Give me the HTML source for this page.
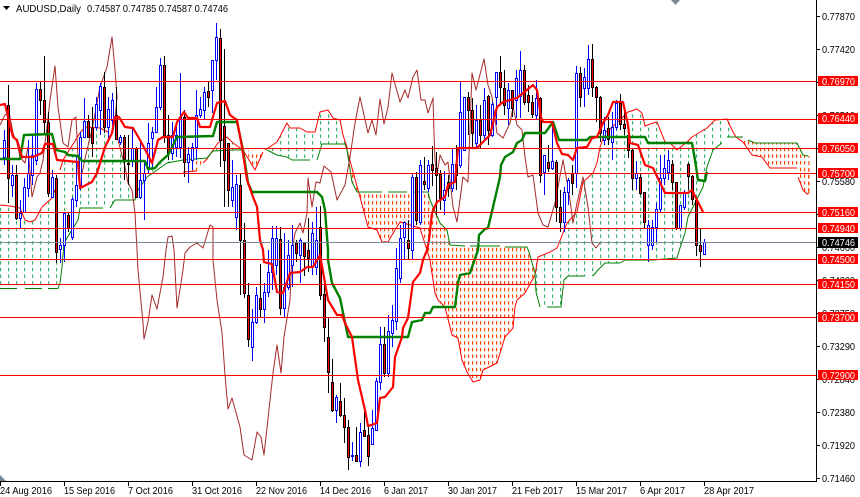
<!DOCTYPE html>
<html>
<head>
<meta charset="utf-8">
<style>
html,body{margin:0;padding:0;background:#fff;}
svg{display:block;}
text{font-family:"Liberation Sans",sans-serif;}
.d{font-size:10.5px;fill:#000;}
.p{font-size:10.5px;fill:#000;}
.w{font-size:10.5px;fill:#fff;}
.t{fill:none;stroke-linejoin:round;}
</style>
</head>
<body>
<svg width="860" height="497" viewBox="0 0 860 497" xmlns="http://www.w3.org/2000/svg">
<defs>
<pattern id="g" x="0" y="1" width="8" height="6.67" patternUnits="userSpaceOnUse"><rect x="0" y="0" width="1.2" height="3.5" fill="#3CB371"/></pattern>
<pattern id="o" x="0" y="1" width="4" height="6.67" patternUnits="userSpaceOnUse"><rect x="0" y="0" width="1.2" height="3.5" fill="#FF4500"/></pattern>
</defs>
<rect width="860" height="497" fill="#fff"/>

<!-- cloud fills -->
<path fill="url(#g)" d="M0 205L10 206L20 208L25 220L30 222L35 220L42 207L52 198L55 190L60 170L63 160L80 133L85 127L100 128L108 132L115 143L123 145L135 147L147 163L167 160L183 160L167 163L157 170L147 177L138 190L135 200L115 200L110 208L80 208L78 220L64 243L62 267L60 283L58 288L0 288Z"/>
<path fill="url(#o)" d="M183 160L207 159L203 163L197 171L183 172Z"/>
<path fill="url(#g)" d="M205 160L213 150L218 143L227 137L233 143L243 150L233 150L213 151L207 158Z"/>
<path fill="url(#o)" d="M245 150L263 152L255 170Z"/>
<path fill="url(#g)" d="M265 150L277 142L287 123L290 128L300 128L307 132L315 132L320 112L328 110L333 118L340 120L343 135L347 147L345 144L322 144L317 160L292 160L287 157L277 155L267 150Z"/>
<path fill="url(#o)" d="M347 147L352 182L357 192L428 192L430 200L440 223L447 230L450 245L527 247L529 252L535 273L525 293L517 300L515 307L513 328L505 337L497 363L483 370L480 380L473 382L467 372L462 360L458 338L452 335L445 307L438 300L435 293L430 260L420 228L400 222L392 235L388 242L382 242L377 230L368 227L360 197L347 150Z"/>
<path fill="url(#g)" d="M535 267L538 257L550 252L557 248L563 233L567 223L577 212L583 182L593 173L597 163L600 147L605 133L612 127L620 120L628 112L637 109L642 113L645 126L653 123L657 122L665 142L670 143L677 150L687 142L692 137L707 128L715 120L727 119L733 132L736 137L727 137L722 143L713 150L707 167L703 187L698 197L688 217L685 233L680 248L677 258L653 260L625 260L620 263L605 263L598 270L593 276L568 276L564 280L562 297L561 307L547 307L540 307L536 292L535 275Z"/>
<path fill="url(#o)" d="M727 137L743 137L748 140L755 143L797 143L803 155L808 156L809 193L807 194L803 190L798 177L797 168L770 168L762 157L752 155L743 142L735 137Z"/>

<!-- cloud edges: span A (red), span B (green) -->
<g class="t" stroke="#FF0000" stroke-width="1">
<polyline points="0,205 10,206 20,208 25,220 30,222 35,220 42,207 52,198 55,190"/>
<polyline points="60,170 63,160 80,133 85,127 100,128 108,132"/>
<polyline points="183,172 197,171"/>
<polyline points="203,163 207,159 213,150 218,143 227,137 233,143 243,150 255,170 263,152"/>
<polyline points="265,150 277,142 287,123 290,128 300,128 307,132 315,132 320,112 328,110 333,118 340,120 343,135 347,147 347,150 360,197 368,227 377,230 382,242 388,242 392,235 400,222 420,228 430,260 435,293 438,300 445,307 452,335 458,338 462,360 467,372 473,382 480,380 483,370 497,363 505,337 513,328 515,307 517,300 525,293 535,275 538,257 550,252 557,248 563,233 567,223 577,212 583,182 593,173 597,163 600,147 605,133 612,127 620,120 628,112 637,109 642,113 645,126 653,123 657,122 665,142 670,143 677,150 687,142 692,137 707,128 715,120 727,119 733,132 736,137 743,142 752,155 762,157 770,168 797,168"/>
<polyline points="798,177 803,190 807,194 809,193"/>
</g>
<g class="t" stroke="#FF4500" stroke-width="1">
<polyline points="809,193 809,156" stroke-dasharray="4 3"/>
</g>
<g class="t" stroke="#008000" stroke-width="1">
<polyline points="0,288.5 17,288.5"/><polyline points="25,288.5 42,288.5"/><polyline points="48,288.5 58,288.5 60,283 62,267 64,243 70,233 78,220 80,208 103,208"/>
<polyline points="110,208 115,200 135,200 138,190 147,177 157,170 167,163 183,160 207,158 213,151 233,150 243,150"/>
<polyline points="267,150 277,155 287,157 292,160 310,160"/><polyline points="317,160 322,144 345,144"/>
<polyline points="345,144 347,150 352,182 357,192 382,192"/><polyline points="388,192 407,192"/><polyline points="412,192 428,192 430,200 440,223 447,230 450,245 465,246"/><polyline points="470,246 500,246"/><polyline points="505,247 527,247 529,252 535,273 536,292 540,307"/>
<polyline points="547,307 561,307 562,297 564,280 568,276 585,276"/><polyline points="593,276 598,270 605,263 620,263 625,260 653,260 677,258 680,248 685,233 688,217 698,197 703,187 707,167 713,150 722,143"/>
<polyline points="727,137 743,137"/><polyline points="748,140 755,143 797,143 803,155 808,156"/>
</g>

<!-- chikou -->
<polyline class="t" stroke="#A52A2A" stroke-width="1" points="0,125 5,115 9,112 13,133 17,143 20,157 25,163 28,147 32,197 37,177 40,173 43,160 47,127 50,100 55,66 58,107 63,143 68,147 72,120 76,117 78,157 82,173 87,150 92,130 100,87 107,67 112,37 115,70 117,97 115,120 118,140 125,167 128,183 132,190 135,213 137,250 138,270 143,323 144,339 148,322 152,295 157,309 163,277 166,250 168,237 172,236 174,250 177,308 183,270 185,253 190,247 197,243 203,248 210,225 213,227 213,260 217,300 222,333 225,375 228,409 232,398 240,427 244,455 252,460 257,432 261,437 264,455 273,373 277,345 281,373 284,337 290,300 292,250 295,233 300,223 303,233 307,213 308,178 312,207 316,182 320,183 324,166 331,172 337,200 345,185 350,157 355,123 360,97 368,133 372,120 376,135 380,99 384,124 388,107 392,73 400,102 405,90 408,98 413,77 417,70 421,100 425,100 428,113 433,98 434,133 435,160 437,175 440,155 445,165 448,162 453,207 457,222 463,177 468,182 472,73 476,90 484,59 488,85 492,97 497,133 503,138 510,123 513,107 517,125 522,130 525,157 528,177 533,175 538,213 543,225 548,227 555,203 563,160 568,187 570,200 573,223 577,203 583,177 588,207 592,243 596,248 600,243"/>

<!-- candle wicks -->
<path stroke="#0000FF" fill="none" stroke-width="1" shape-rendering="crispEdges" d="M4.5 130V165M12.5 165V197M20.5 200V228M24.5 178V213M28.5 140V197M32.5 135V185M36.5 83V165M52.5 170V198M60.5 238V263M64.5 213V262M72.5 197V240M76.5 157V207M80.5 132V190M84.5 98V138M96.5 97V130M100.5 83V135M108.5 97V140M112.5 93V133M120.5 135V145M132.5 127V167M140.5 140V199M144.5 163V220M148.5 123V173M152.5 127V167M156.5 87V133M160.5 58V110M172.5 122V160M176.5 122V157M180.5 73V158M188.5 147V183M192.5 143V170M196.5 90V160M200.5 97V118M204.5 87V120M212.5 60V113M216.5 23V80M232.5 160V207M236.5 175V230M252.5 309V361M256.5 287V324M264.5 283V323M268.5 250V297M272.5 226V290M276.5 226V275M284.5 233V317M288.5 240V290M292.5 225V287M300.5 238V283M312.5 222V275M316.5 207V275M336.5 395V423M352.5 442V461M360.5 423V467M372.5 410V444M376.5 378V430M380.5 327V390M388.5 315V377M392.5 305V347M396.5 248V330M400.5 225V283M404.5 222V260M412.5 174V260M420.5 160V225M428.5 160V192M444.5 171V215M452.5 149V192M460.5 82V168M464.5 97V150M476.5 105V147M484.5 88V140M492.5 102V137M496.5 72V125M508.5 83V125M516.5 70V118M520.5 51V118M536.5 80V120M544.5 155V195M552.5 125V170M564.5 187V232M568.5 178V205M576.5 66V188M584.5 68V107M588.5 45V95M604.5 117V145M612.5 112V160M616.5 100V130M636.5 161V190M648.5 220V262M652.5 220V250M656.5 203V243M660.5 155V212M664.5 155V185M668.5 150V180M680.5 205V230M684.5 190V210M704.5 239V254"/>
<path stroke="#000" fill="none" stroke-width="1" shape-rendering="crispEdges" d="M8.5 85V203M16.5 165V220M40.5 82V115M44.5 56V133M48.5 112V197M56.5 175V263M68.5 213V232M88.5 115V138M92.5 107V157M104.5 72V133M116.5 87V140M124.5 135V180M128.5 135V185M136.5 147V197M164.5 56V143M168.5 115V160M184.5 110V177M208.5 82V107M220.5 29V167M224.5 49V207M228.5 143V207M240.5 173V295M244.5 223V298M248.5 283V347M260.5 264V317M280.5 227V315M296.5 240V262M304.5 242V276M308.5 218V272M320.5 206V300M324.5 280V342M328.5 318V393M332.5 359V412M340.5 383V417M344.5 398V443M348.5 420V470M356.5 427V461M364.5 406V437M368.5 425V466M384.5 327V377M408.5 220V260M416.5 172V225M424.5 157V190M432.5 146V186M436.5 152V215M440.5 170V210M448.5 175V197M456.5 145V190M468.5 92V135M472.5 98V147M480.5 105V148M488.5 95V145M500.5 56V105M504.5 70V115M512.5 90V117M524.5 65V105M528.5 85V112M532.5 95V118M540.5 97V183M548.5 145V172M556.5 160V222M560.5 190V232M572.5 165V195M580.5 67V107M592.5 44V97M596.5 86V122M600.5 96V142M608.5 117V145M620.5 94V130M624.5 108V135M628.5 128V158M632.5 148V190M640.5 173V195M644.5 192V228M672.5 160V190M676.5 182V230M688.5 163V190M692.5 175V205M696.5 200V256M700.5 229V267"/>
<!-- bull bodies -->
<path stroke="#0000FF" fill="#fff" stroke-width="1" shape-rendering="crispEdges" d="M3.5 140.5h2V157.5h-2zM11.5 175.5h2V185.5h-2zM19.5 213.5h2V218.5h-2zM23.5 187.5h2V212.5h-2zM27.5 173.5h2V188.5h-2zM31.5 155.5h2V175.5h-2zM35.5 89.5h2V160.5h-2zM51.5 177.5h2V197.5h-2zM59.5 245.5h2V249.5h-2zM63.5 213.5h2V245.5h-2zM71.5 199.5h2V237.5h-2zM75.5 185.5h2V200.5h-2zM79.5 137.5h2V185.5h-2zM83.5 121.5h2V137.5h-2zM95.5 104.5h2V127.5h-2zM99.5 86.5h2V110.5h-2zM107.5 109.5h2V127.5h-2zM111.5 100.5h2V120.5h-2zM119.5 137.5h2V142.5h-2zM131.5 148.5h2V160.5h-2zM139.5 180.5h2V197.5h-2zM143.5 173.5h2V180.5h-2zM147.5 143.5h2V167.5h-2zM151.5 132.5h2V138.5h-2zM155.5 107.5h2V132.5h-2zM159.5 65.5h2V107.5h-2zM171.5 135.5h2V153.5h-2zM175.5 135.5h2V147.5h-2zM179.5 117.5h2V147.5h-2zM187.5 154.5h2V162.5h-2zM191.5 147.5h2V160.5h-2zM195.5 115.5h2V147.5h-2zM199.5 109.5h2V115.5h-2zM203.5 92.5h2V110.5h-2zM211.5 60.5h2V90.5h-2zM215.5 37.5h2V60.5h-2zM231.5 187.5h2V200.5h-2zM235.5 184.5h2V217.5h-2zM251.5 322.5h2V347.5h-2zM255.5 295.5h2V322.5h-2zM263.5 292.5h2V309.5h-2zM267.5 272.5h2V292.5h-2zM271.5 238.5h2V272.5h-2zM275.5 238.5h2V265.5h-2zM283.5 287.5h2V308.5h-2zM287.5 255.5h2V287.5h-2zM291.5 245.5h2V265.5h-2zM299.5 240.5h2V255.5h-2zM311.5 233.5h2V266.5h-2zM315.5 240.5h2V267.5h-2zM335.5 397.5h2V410.5h-2zM351.5 455.5h2V456.5h-2zM359.5 432.5h2V461.5h-2zM371.5 428.5h2V444.5h-2zM375.5 381.5h2V430.5h-2zM379.5 344.5h2V382.5h-2zM387.5 331.5h2V373.5h-2zM391.5 320.5h2V333.5h-2zM395.5 268.5h2V321.5h-2zM399.5 238.5h2V278.5h-2zM403.5 222.5h2V237.5h-2zM411.5 177.5h2V250.5h-2zM419.5 165.5h2V222.5h-2zM427.5 165.5h2V188.5h-2zM443.5 190.5h2V200.5h-2zM451.5 164.5h2V188.5h-2zM459.5 112.5h2V165.5h-2zM463.5 97.5h2V150.5h-2zM475.5 120.5h2V143.5h-2zM483.5 100.5h2V135.5h-2zM491.5 104.5h2V135.5h-2zM495.5 72.5h2V97.5h-2zM507.5 90.5h2V108.5h-2zM515.5 78.5h2V100.5h-2zM519.5 70.5h2V96.5h-2zM535.5 98.5h2V115.5h-2zM543.5 155.5h2V172.5h-2zM551.5 161.5h2V168.5h-2zM563.5 192.5h2V222.5h-2zM567.5 180.5h2V192.5h-2zM575.5 73.5h2V173.5h-2zM583.5 77.5h2V88.5h-2zM587.5 59.5h2V88.5h-2zM603.5 130.5h2V140.5h-2zM611.5 127.5h2V142.5h-2zM615.5 103.5h2V127.5h-2zM635.5 173.5h2V178.5h-2zM647.5 225.5h2V245.5h-2zM651.5 227.5h2V245.5h-2zM655.5 209.5h2V227.5h-2zM659.5 178.5h2V209.5h-2zM663.5 168.5h2V178.5h-2zM667.5 160.5h2V172.5h-2zM679.5 205.5h2V228.5h-2zM683.5 192.5h2V207.5h-2zM703.5 242.5h2V254.5h-2z"/>
<!-- bear bodies -->
<path stroke="#000" fill="#FF0000" stroke-width="1" shape-rendering="crispEdges" d="M7.5 105.5h2V178.5h-2zM15.5 175.5h2V218.5h-2zM39.5 89.5h2V100.5h-2zM43.5 100.5h2V122.5h-2zM47.5 122.5h2V193.5h-2zM55.5 178.5h2V252.5h-2zM67.5 215.5h2V228.5h-2zM87.5 121.5h2V137.5h-2zM91.5 128.5h2V143.5h-2zM103.5 87.5h2V127.5h-2zM115.5 115.5h2V139.5h-2zM123.5 137.5h2V159.5h-2zM127.5 163.5h2V164.5h-2zM135.5 148.5h2V197.5h-2zM163.5 65.5h2V135.5h-2zM167.5 135.5h2V153.5h-2zM183.5 117.5h2V162.5h-2zM207.5 91.5h2V97.5h-2zM219.5 38.5h2V140.5h-2zM223.5 126.5h2V160.5h-2zM227.5 143.5h2V190.5h-2zM239.5 185.5h2V240.5h-2zM243.5 240.5h2V293.5h-2zM247.5 295.5h2V339.5h-2zM259.5 298.5h2V309.5h-2zM279.5 239.5h2V308.5h-2zM295.5 243.5h2V253.5h-2zM303.5 243.5h2V256.5h-2zM307.5 250.5h2V258.5h-2zM319.5 227.5h2V295.5h-2zM323.5 294.5h2V327.5h-2zM327.5 337.5h2V372.5h-2zM331.5 382.5h2V410.5h-2zM339.5 401.5h2V415.5h-2zM343.5 415.5h2V427.5h-2zM347.5 427.5h2V457.5h-2zM355.5 455.5h2V461.5h-2zM363.5 430.5h2V436.5h-2zM367.5 435.5h2V456.5h-2zM383.5 344.5h2V373.5h-2zM407.5 240.5h2V248.5h-2zM415.5 177.5h2V220.5h-2zM423.5 181.5h2V184.5h-2zM431.5 164.5h2V170.5h-2zM435.5 168.5h2V175.5h-2zM439.5 174.5h2V198.5h-2zM447.5 182.5h2V188.5h-2zM455.5 164.5h2V175.5h-2zM467.5 97.5h2V110.5h-2zM471.5 110.5h2V133.5h-2zM479.5 120.5h2V135.5h-2zM487.5 96.5h2V130.5h-2zM499.5 72.5h2V87.5h-2zM503.5 88.5h2V105.5h-2zM511.5 90.5h2V108.5h-2zM523.5 70.5h2V102.5h-2zM527.5 95.5h2V102.5h-2zM531.5 102.5h2V114.5h-2zM539.5 98.5h2V175.5h-2zM547.5 162.5h2V168.5h-2zM555.5 162.5h2V207.5h-2zM559.5 207.5h2V222.5h-2zM571.5 173.5h2V183.5h-2zM579.5 73.5h2V97.5h-2zM591.5 59.5h2V87.5h-2zM595.5 87.5h2V97.5h-2zM599.5 97.5h2V133.5h-2zM607.5 128.5h2V139.5h-2zM619.5 103.5h2V124.5h-2zM623.5 124.5h2V128.5h-2zM627.5 135.5h2V150.5h-2zM631.5 150.5h2V178.5h-2zM639.5 177.5h2V193.5h-2zM643.5 192.5h2V222.5h-2zM671.5 164.5h2V182.5h-2zM675.5 182.5h2V228.5h-2zM687.5 164.5h2V176.5h-2zM691.5 176.5h2V199.5h-2zM695.5 200.5h2V245.5h-2zM699.5 245.5h2V251.5h-2z"/>

<!-- kijun -->
<polyline class="t" stroke="#008000" stroke-width="2.4" points="0,159 20,159 24,135 52,134 56,150 65,152 68,155 78,156 82,161 145,161 148,169 155,168 160,162 168,155 177,137 213,136 217,122 237,122 243,150 248,183 252,192 317,192 322,197 325,210 328,250 328,260 332,283 340,298 348,337 408,337 412,322 422,320 425,313 430,313 433,307 455,307 458,283 460,275 470,273 478,250 479,235 485,229 488,228 493,207 500,177 501,165 505,157 513,152 517,143 522,140 525,133 545,133 553,122 559,140 570,140 587,140 590,137 645,137 648,143 692,143 695,160 698,180 705,181 707,172"/>
<!-- tenkan -->
<polyline class="t" stroke="#FF0000" stroke-width="2.2" points="0,105 5,104 8,117 13,137 17,140 22,157 33,157 42,153 45,144 53,144 57,160 78,162 80,188 92,182 97,173 105,147 112,133 115,117 119,117 125,127 133,128 140,140 147,153 152,163 158,140 163,137 173,137 177,122 184,112 188,118 197,118 200,127 210,127 217,103 225,101 230,115 237,120 242,147 247,180 253,197 257,207 260,240 263,250 264,262 272,264 277,292 283,293 290,273 300,272 307,267 313,267 320,255 325,283 328,300 337,315 342,315 345,323 352,337 358,380 365,410 368,426 377,423 380,398 385,397 393,387 395,357 402,337 403,328 408,318 413,282 420,273 423,260 427,250 429,240 432,213 437,202 445,197 448,185 455,182 458,148 477,148 490,135 497,107 503,102 517,98 533,85 537,90 541,117 543,122 552,122 557,143 562,154 568,155 573,160 577,148 587,147 592,138 597,137 603,123 608,115 613,102 623,102 628,125 630,143 638,145 645,165 653,168 665,193 688,193 692,190 703,212"/>

<!-- current price line -->
<rect x="0" y="242" width="817" height="1" fill="#778899"/>
<!-- horizontal levels -->
<g fill="#FF0000" shape-rendering="crispEdges">
<rect x="0" y="81" width="817" height="1"/>
<rect x="0" y="119" width="817" height="1"/>
<rect x="0" y="148" width="817" height="1"/>
<rect x="0" y="173" width="817" height="1"/>
<rect x="0" y="212" width="817" height="1"/>
<rect x="0" y="228" width="817" height="1"/>
<rect x="0" y="259" width="817" height="1"/>
<rect x="0" y="284" width="817" height="1"/>
<rect x="0" y="317" width="817" height="1"/>
<rect x="0" y="375" width="817" height="1"/>
</g>

<!-- axes -->
<g fill="#000" shape-rendering="crispEdges">
<rect x="816" y="0" width="1" height="482"/>
<rect x="0" y="481" width="817" height="1"/>
<rect x="0" y="481" width="1" height="5"/><rect x="64" y="481" width="1" height="5"/><rect x="128" y="481" width="1" height="5"/><rect x="192" y="481" width="1" height="5"/><rect x="256" y="481" width="1" height="5"/><rect x="320" y="481" width="1" height="5"/><rect x="384" y="481" width="1" height="5"/><rect x="448" y="481" width="1" height="5"/><rect x="512" y="481" width="1" height="5"/><rect x="576" y="481" width="1" height="5"/><rect x="640" y="481" width="1" height="5"/><rect x="704" y="481" width="1" height="5"/>
<rect x="817" y="16" width="3" height="1"/><rect x="817" y="49" width="3" height="1"/><rect x="817" y="82" width="3" height="1"/><rect x="817" y="115" width="3" height="1"/><rect x="817" y="148" width="3" height="1"/><rect x="817" y="181" width="3" height="1"/><rect x="817" y="214" width="3" height="1"/><rect x="817" y="247" width="3" height="1"/><rect x="817" y="280" width="3" height="1"/><rect x="817" y="313" width="3" height="1"/><rect x="817" y="346" width="3" height="1"/><rect x="817" y="379" width="3" height="1"/><rect x="817" y="412" width="3" height="1"/><rect x="817" y="445" width="3" height="1"/><rect x="817" y="478" width="3" height="1"/>
</g>

<!-- markers -->
<path d="M671 0h9l-4.5 5z" fill="#778899"/>
<path d="M0 475l6 6h-6z" fill="#778899"/>
<path d="M3 6h7l-3.5 4z" fill="#000"/>

<!-- header -->
<text x="16" y="12" class="d" fill="#000" textLength="65" lengthAdjust="spacingAndGlyphs">AUDUSD,Daily</text>
<text x="87" y="12" class="d" textLength="141" lengthAdjust="spacingAndGlyphs">0.74587 0.74785 0.74587 0.74746</text>

<!-- time axis -->
<text x="0" y="494" class="d" textLength="52" lengthAdjust="spacingAndGlyphs">24 Aug 2016</text>
<text x="64" y="494" class="d" textLength="51" lengthAdjust="spacingAndGlyphs">15 Sep 2016</text>
<text x="128" y="494" class="d" textLength="45" lengthAdjust="spacingAndGlyphs">7 Oct 2016</text>
<text x="192" y="494" class="d" textLength="50" lengthAdjust="spacingAndGlyphs">31 Oct 2016</text>
<text x="256" y="494" class="d" textLength="51" lengthAdjust="spacingAndGlyphs">22 Nov 2016</text>
<text x="320" y="494" class="d" textLength="51" lengthAdjust="spacingAndGlyphs">14 Dec 2016</text>
<text x="384" y="494" class="d" textLength="44" lengthAdjust="spacingAndGlyphs">6 Jan 2017</text>
<text x="448" y="494" class="d" textLength="49" lengthAdjust="spacingAndGlyphs">30 Jan 2017</text>
<text x="512" y="494" class="d" textLength="51" lengthAdjust="spacingAndGlyphs">21 Feb 2017</text>
<text x="576" y="494" class="d" textLength="51" lengthAdjust="spacingAndGlyphs">15 Mar 2017</text>
<text x="640" y="494" class="d" textLength="45" lengthAdjust="spacingAndGlyphs">6 Apr 2017</text>
<text x="704" y="494" class="d" textLength="50" lengthAdjust="spacingAndGlyphs">28 Apr 2017</text>

<!-- price axis -->
<g class="p">
<text x="822" y="20" class="p" textLength="33" lengthAdjust="spacingAndGlyphs">0.77870</text>
<text x="822" y="53" class="p" textLength="33" lengthAdjust="spacingAndGlyphs">0.77420</text>
<text x="822" y="119" class="p" textLength="33" lengthAdjust="spacingAndGlyphs">0.76510</text>
<text x="822" y="185" class="p" textLength="33" lengthAdjust="spacingAndGlyphs">0.75580</text>
<text x="822" y="251" class="p" textLength="33" lengthAdjust="spacingAndGlyphs">0.74660</text>
<text x="822" y="284" class="p" textLength="33" lengthAdjust="spacingAndGlyphs">0.74200</text>
<text x="822" y="317" class="p" textLength="33" lengthAdjust="spacingAndGlyphs">0.73750</text>
<text x="822" y="350" class="p" textLength="33" lengthAdjust="spacingAndGlyphs">0.73290</text>
<text x="822" y="383" class="p" textLength="33" lengthAdjust="spacingAndGlyphs">0.72840</text>
<text x="822" y="416" class="p" textLength="33" lengthAdjust="spacingAndGlyphs">0.72380</text>
<text x="822" y="449" class="p" textLength="33" lengthAdjust="spacingAndGlyphs">0.71920</text>
<text x="822" y="482" class="p" textLength="33" lengthAdjust="spacingAndGlyphs">0.71460</text>
</g>
<g fill="#FF0000" shape-rendering="crispEdges">
<rect x="818" y="76" width="40" height="10"/>
<rect x="818" y="113" width="40" height="11"/>
<rect x="818" y="143" width="40" height="10"/>
<rect x="818" y="168" width="40" height="10"/>
<rect x="818" y="207" width="40" height="10"/>
<rect x="818" y="223" width="40" height="10"/>
<rect x="818" y="254" width="40" height="10"/>
<rect x="818" y="279" width="40" height="10"/>
<rect x="818" y="312" width="40" height="10"/>
<rect x="818" y="370" width="40" height="10"/>
</g>
<rect x="818" y="237" width="40" height="11" fill="#000" shape-rendering="crispEdges"/>
<text x="822" y="85" class="w" textLength="33" lengthAdjust="spacingAndGlyphs">0.76970</text>
<text x="822" y="122" class="w" textLength="33" lengthAdjust="spacingAndGlyphs">0.76440</text>
<text x="822" y="152" class="w" textLength="33" lengthAdjust="spacingAndGlyphs">0.76050</text>
<text x="822" y="177" class="w" textLength="33" lengthAdjust="spacingAndGlyphs">0.75700</text>
<text x="822" y="216" class="w" textLength="33" lengthAdjust="spacingAndGlyphs">0.75160</text>
<text x="822" y="232" class="w" textLength="33" lengthAdjust="spacingAndGlyphs">0.74940</text>
<text x="822" y="246" class="w" textLength="33" lengthAdjust="spacingAndGlyphs">0.74746</text>
<text x="822" y="263" class="w" textLength="33" lengthAdjust="spacingAndGlyphs">0.74500</text>
<text x="822" y="288" class="w" textLength="33" lengthAdjust="spacingAndGlyphs">0.74150</text>
<text x="822" y="321" class="w" textLength="33" lengthAdjust="spacingAndGlyphs">0.73700</text>
<text x="822" y="379" class="w" textLength="33" lengthAdjust="spacingAndGlyphs">0.72900</text>
</svg>
</body>
</html>
